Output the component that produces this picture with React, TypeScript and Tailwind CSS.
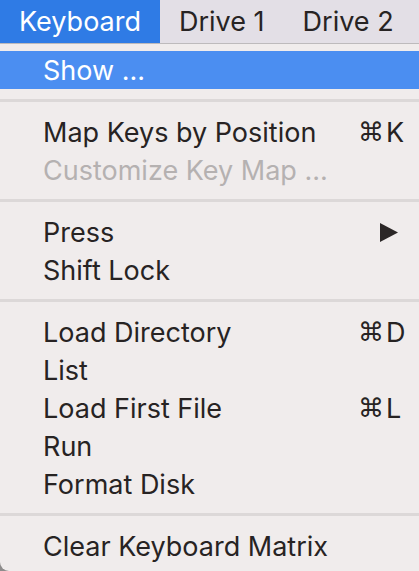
import React from "react";

type Item =
  | { kind: "item"; label: string; shortcut?: string; disabled?: boolean; submenu?: boolean; active?: boolean }
  | { kind: "sep" };

const MENU: Item[] = [
  { kind: "item", label: "Show ...", active: true },
  { kind: "sep" },
  { kind: "item", label: "Map Keys by Position", shortcut: "K" },
  { kind: "item", label: "Customize Key Map ...", disabled: true },
  { kind: "sep" },
  { kind: "item", label: "Press", submenu: true },
  { kind: "item", label: "Shift Lock" },
  { kind: "sep" },
  { kind: "item", label: "Load Directory", shortcut: "D" },
  { kind: "item", label: "List" },
  { kind: "item", label: "Load First File", shortcut: "L" },
  { kind: "item", label: "Run" },
  { kind: "item", label: "Format Disk" },
  { kind: "sep" },
  { kind: "item", label: "Clear Keyboard Matrix" },
];

const font = "font-['Inter','Noto_Sans',sans-serif]";

function MenuRow({ item }: { item: Extract<Item, { kind: "item" }> }) {
  const color = item.active
    ? "bg-[#4b8ef1] text-white"
    : item.disabled
      ? "text-[#b5b1b1]"
      : "text-[#272323]";
  return (
    <div className={`h-[38px] flex items-center pl-[43px] pr-[13px] text-[27px] leading-none ${color}`}>
      <span className="flex-1 whitespace-nowrap">{item.label}</span>
      {item.shortcut && (
        <span className="w-[48px] flex items-center whitespace-nowrap">
          <span className="font-['DejaVu_Sans',sans-serif] text-[26px] mr-[2px]">⌘</span>
          {item.shortcut}
        </span>
      )}
      {item.submenu && (
        <svg width="18" height="19" viewBox="0 0 18 19" className="mr-[8px]">
          <polygon points="0,0 18,9.5 0,19" fill="#2b2727" />
        </svg>
      )}
    </div>
  );
}

export default function App() {
  return (
    <div className={`w-[419px] h-[571px] overflow-hidden bg-[#8e8c8c] ${font}`}>
      {/* menu bar */}
      <div className="h-[44px] flex bg-[#e3dfe6] border-b border-[#bdbabc] text-[27px] leading-none text-[#272323]">
        <div className="h-[43px] w-[160px] flex items-center pl-[19px] bg-[#2f7be5] text-white">Keyboard</div>
        <div className="h-[43px] flex items-center px-[19px]">Drive 1</div>
        <div className="h-[43px] flex items-center px-[19px]">Drive 2</div>
      </div>

      {/* dropdown */}
      <div className="h-[527px] bg-[#f0ecec] rounded-bl-[9px] pt-[7px]">
        {MENU.map((item, i) =>
          item.kind === "sep" ? (
            <div key={i} className="pt-[10px] pb-[11px]">
              <div className="h-[3px] bg-[#dcd8d8]" />
            </div>
          ) : (
            <MenuRow key={i} item={item} />
          )
        )}
      </div>
    </div>
  );
}
